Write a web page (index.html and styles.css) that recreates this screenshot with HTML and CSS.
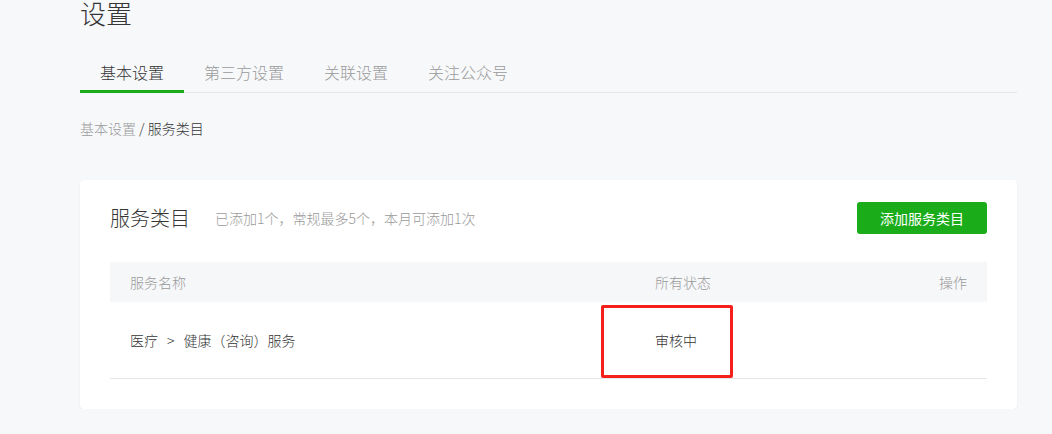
FILE: index.html
```html
<!DOCTYPE html>
<html lang="zh-CN">
<head>
<meta charset="utf-8">
<title>设置</title>
<link rel="stylesheet" href="styles.css">
</head>
<body>
<div class="page">
  <h1 class="page-title">设置</h1>
  <nav class="tabs">
    <a class="tab active">基本设置</a>
    <a class="tab">第三方设置</a>
    <a class="tab">关联设置</a>
    <a class="tab">关注公众号</a>
  </nav>
  <div class="crumb"><span class="crumb-link">基本设置</span> / 服务类目</div>
  <section class="card">
    <div class="card-head">
      <h2 class="card-title">服务类目</h2>
      <span class="card-tip">已添加1个<span class="punc">，</span>常规最多5个<span class="punc">，</span>本月可添加1次</span>
      <button class="btn-primary">添加服务类目</button>
    </div>
    <div class="table">
      <div class="thead">
        <div class="cell">服务名称</div>
        <div class="cell">所有状态</div>
        <div class="cell right">操作</div>
      </div>
      <div class="trow">
        <div class="cell">医疗<span class="sep">&gt;</span>健康<span class="punc">（</span>咨询<span class="punc">）</span>服务</div>
        <div class="cell status">审核中<span class="mark"></span></div>
        <div class="cell right"></div>
      </div>
    </div>
  </section>
</div>
</body>
</html>
```

FILE: styles.css
```css
* { box-sizing: border-box; }
html, body { margin: 0; padding: 0; }
body {
  background: #f7f8fa;
  font-family: "Noto Sans CJK SC", "Liberation Sans", sans-serif;
  font-weight: 300;
  color: #353535;
}
.page {
  width: 1017px;
  padding-left: 80px;
}
.page-title {
  margin: -4px 0 0;
  font-size: 26px;
  font-weight: 300;
  line-height: 34px;
  color: #353535;
}
.tabs {
  display: flex;
  margin-top: 22px;
  border-bottom: 1px solid #e4e6e9;
}
.tab {
  padding: 0 20px;
  font-size: 16px;
  line-height: 40px;
  height: 41px;
  color: #9a9a9a;
  margin-bottom: -1px;
  border-bottom: 3px solid transparent;
}
.tab.active {
  color: #353535;
  border-bottom-color: #1aad19;
}
.crumb {
  margin-top: 23px;
  font-size: 14px;
  line-height: 24px;
  color: #353535;
}
.crumb-link { color: #9a9a9a; }
.card {
  margin-top: 40px;
  background: #fff;
  border-radius: 4px;
  box-shadow: 0 1px 2px rgba(0,0,0,0.08);
  padding: 22px 30px 30px;
}
.card-head {
  display: flex;
  align-items: center;
  height: 32px;
}
.card-title {
  margin: 0;
  font-size: 20px;
  font-weight: 300;
  color: #353535;
  line-height: 32px;
}
.card-tip {
  margin-left: 25px;
  font-size: 14px;
  color: #9a9a9a;
}
.punc {
  font-family: "Noto Sans CJK TC", "Noto Sans CJK SC", sans-serif;
}
.btn-primary {
  margin-left: auto;
  width: 130px;
  height: 32px;
  border: 0;
  border-radius: 3px;
  background: #1aad19;
  color: #fff;
  font-family: inherit;
  font-weight: 400;
  font-size: 14px;
}
.table { margin-top: 28px; }
.thead, .trow {
  display: grid;
  grid-template-columns: 525px 1fr 150px;
}
.thead {
  height: 40px;
  background: #f6f7f9;
  color: #9a9a9a;
  font-size: 14px;
  line-height: 40px;
}
.trow {
  height: 77px;
  align-items: center;
  border-bottom: 1px solid #e4e8eb;
  font-size: 14px;
  color: #353535;
}
.cell { padding: 0 20px; }
.cell.right { text-align: right; }
.sep { margin: 0 9px; }
.status { position: relative; }
.mark {
  position: absolute;
  left: -34px;
  top: -25px;
  width: 132px;
  height: 73px;
  border: 3px solid #f5201b;
  border-radius: 2px;
}
```
